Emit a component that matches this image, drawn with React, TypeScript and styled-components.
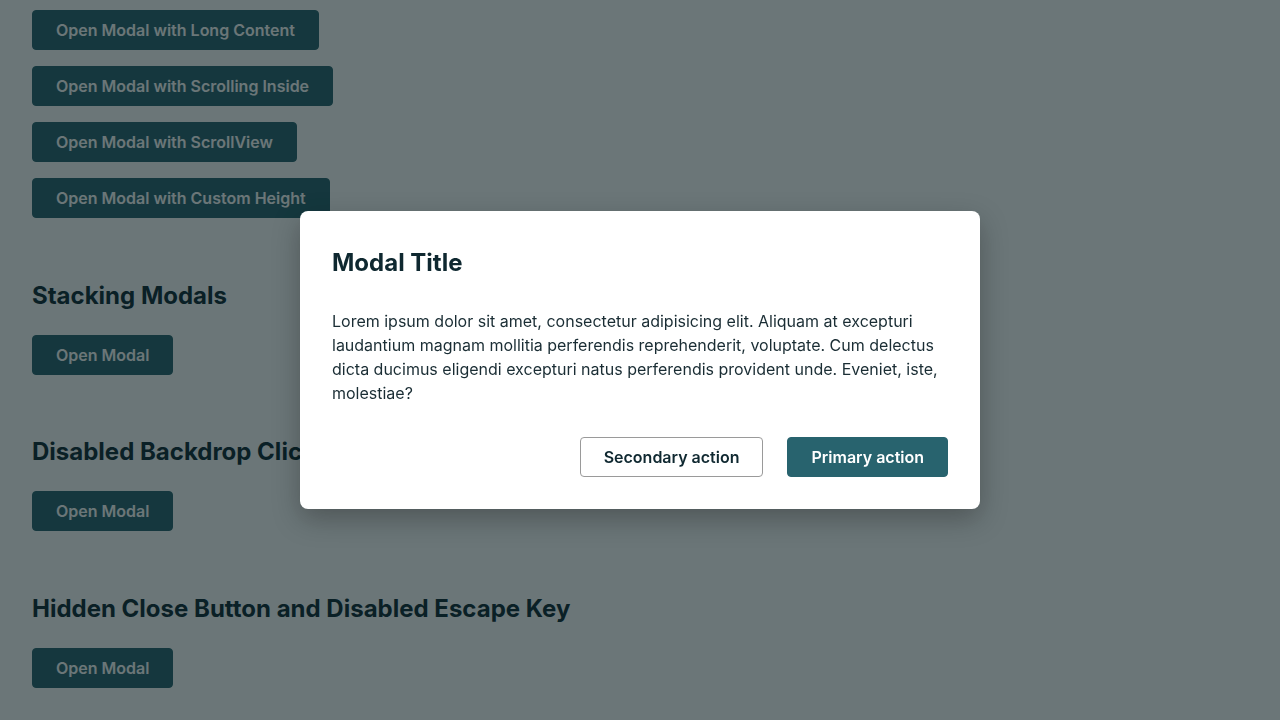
import React from "react";
import styled, { createGlobalStyle } from "styled-components";

const Global = createGlobalStyle`
  html, body { margin: 0; padding: 0; background: #ffffff; }
  body { font-family: Inter, "Noto Sans", sans-serif; color: #0f2830; overflow: hidden; }
  * { box-sizing: border-box; }
`;

const Page = styled.main`
  padding: 10px 32px 40px;
  display: flex;
  flex-direction: column;
  align-items: flex-start;
`;

const ButtonStack = styled.div`
  display: flex;
  flex-direction: column;
  align-items: flex-start;
  gap: 16px;
`;

const Section = styled.section`
  display: flex;
  flex-direction: column;
  align-items: flex-start;
`;

const SectionTitle = styled.h2`
  margin: 61.5px 0 24px;
  font-size: 24px;
  line-height: 31px;
  font-weight: 700;
  color: #0d2a33;
`;

const Button = styled.button<{ $variant?: "primary" | "secondary" }>`
  height: 40px;
  padding: 0 23px;
  border-radius: 4px;
  font-family: Inter, "Noto Sans", sans-serif;
  font-size: 16px;
  font-weight: 600;
  line-height: 24px;
  cursor: pointer;
  white-space: nowrap;
  border: 1px solid ${(p) => (p.$variant === "secondary" ? "#9a9a9a" : "#28636e")};
  background: ${(p) => (p.$variant === "secondary" ? "#ffffff" : "#28636e")};
  color: ${(p) => (p.$variant === "secondary" ? "#0f2830" : "#ffffff")};
`;

const Overlay = styled.div`
  position: fixed;
  inset: 0;
  background: rgba(8, 26, 30, 0.6);
  display: flex;
  align-items: center;
  justify-content: center;
`;

const Dialog = styled.div`
  width: 680px;
  background: #ffffff;
  border-radius: 8px;
  padding: 32px;
  box-shadow: 0 10px 28px rgba(0, 0, 0, 0.28);
  display: flex;
  flex-direction: column;
`;

const DialogTitle = styled.h1`
  margin: 0 0 26px;
  font-size: 24px;
  line-height: 40px;
  font-weight: 700;
  color: #0f2830;
`;

const DialogBody = styled.p`
  margin: 0;
  font-size: 16px;
  line-height: 24px;
  color: #1a2d34;
`;

const Footer = styled.div`
  margin-top: 32px;
  display: flex;
  justify-content: flex-end;
  gap: 24px;
`;

const topButtons = [
  "Open Modal with Long Content",
  "Open Modal with Scrolling Inside",
  "Open Modal with ScrollView",
  "Open Modal with Custom Height",
];

const sections = [
  "Stacking Modals",
  "Disabled Backdrop Click",
  "Hidden Close Button and Disabled Escape Key",
];

export default function App() {
  return (
    <>
      <Global />
      <Page>
        <ButtonStack>
          {topButtons.map((t) => (
            <Button key={t}>{t}</Button>
          ))}
        </ButtonStack>
        {sections.map((s) => (
          <Section key={s}>
            <SectionTitle>{s}</SectionTitle>
            <Button>Open Modal</Button>
          </Section>
        ))}
      </Page>
      <Overlay>
        <Dialog role="dialog" aria-modal="true">
          <DialogTitle>Modal Title</DialogTitle>
          <DialogBody>
            Lorem ipsum dolor sit amet, consectetur adipisicing elit. Aliquam at excepturi
            laudantium magnam mollitia perferendis reprehenderit, voluptate. Cum delectus
            dicta ducimus eligendi excepturi natus perferendis provident unde. Eveniet, iste,
            molestiae?
          </DialogBody>
          <Footer>
            <Button $variant="secondary">Secondary action</Button>
            <Button $variant="primary">Primary action</Button>
          </Footer>
        </Dialog>
      </Overlay>
    </>
  );
}
